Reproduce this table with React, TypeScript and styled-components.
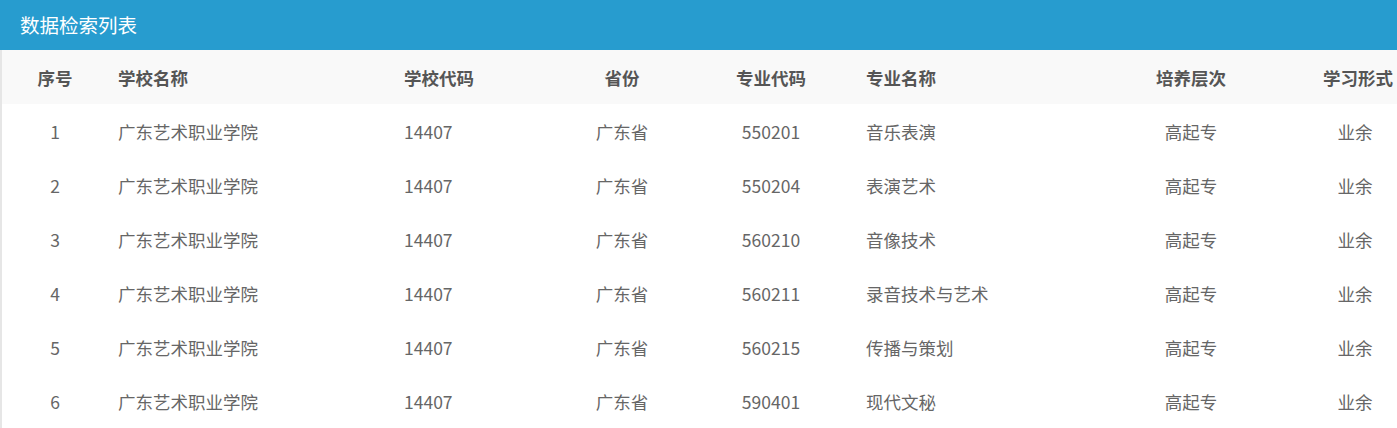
import React from "react";
import styled, { createGlobalStyle } from "styled-components";

const GlobalStyle = createGlobalStyle`
  html, body { margin: 0; padding: 0; background: #fff; }
  body { font-family: "Noto Sans CJK SC", "Noto Sans", sans-serif; }
`;

const Panel = styled.section`
  width: 1397px;
  overflow: hidden;
`;

const TitleBar = styled.div`
  height: 50px;
  background: #279ccf;
  color: #fff;
  font-size: 19.5px;
  line-height: 49px;
  padding-left: 20px;
  box-sizing: border-box;
`;

const TableWrap = styled.div`
  border-left: 2px solid #e6e6e6;
`;

const Table = styled.table`
  border-collapse: collapse;
  table-layout: fixed;
  width: 1395px;
`;

const HeadRow = styled.tr`
  background: #f9f9f9;
  height: 54px;
`;

const BodyRow = styled.tr`
  height: 54px;
  background: #fff;
`;

type Align = "left" | "center";

const Th = styled.th<{ $align: Align }>`
  font-size: 17.5px;
  font-weight: 700;
  color: #555;
  text-align: ${(p) => p.$align};
  padding: 0 10px;
  white-space: nowrap;
`;

const Td = styled.td<{ $align: Align }>`
  font-size: 17.5px;
  color: #666;
  text-align: ${(p) => p.$align};
  padding: 0 10px;
  white-space: nowrap;
`;

const columns: { title: string; width: number; align: Align }[] = [
  { title: "序号", width: 106, align: "center" },
  { title: "学校名称", width: 286, align: "left" },
  { title: "学校代码", width: 164, align: "left" },
  { title: "省份", width: 128, align: "center" },
  { title: "专业代码", width: 170, align: "center" },
  { title: "专业名称", width: 213, align: "left" },
  { title: "培养层次", width: 244, align: "center" },
  { title: "学习形式", width: 84, align: "center" },
];

const rows = [
  ["1", "广东艺术职业学院", "14407", "广东省", "550201", "音乐表演", "高起专", "业余"],
  ["2", "广东艺术职业学院", "14407", "广东省", "550204", "表演艺术", "高起专", "业余"],
  ["3", "广东艺术职业学院", "14407", "广东省", "560210", "音像技术", "高起专", "业余"],
  ["4", "广东艺术职业学院", "14407", "广东省", "560211", "录音技术与艺术", "高起专", "业余"],
  ["5", "广东艺术职业学院", "14407", "广东省", "560215", "传播与策划", "高起专", "业余"],
  ["6", "广东艺术职业学院", "14407", "广东省", "590401", "现代文秘", "高起专", "业余"],
];

export default function App() {
  return (
    <>
      <GlobalStyle />
      <Panel>
        <TitleBar>数据检索列表</TitleBar>
        <TableWrap>
          <Table>
            <colgroup>
              {columns.map((c) => (
                <col key={c.title} style={{ width: c.width }} />
              ))}
            </colgroup>
            <thead>
              <HeadRow>
                {columns.map((c) => (
                  <Th key={c.title} $align={c.align}>
                    {c.title}
                  </Th>
                ))}
              </HeadRow>
            </thead>
            <tbody>
              {rows.map((r) => (
                <BodyRow key={r[0]}>
                  {r.map((v, i) => (
                    <Td key={i} $align={columns[i].align}>
                      {v}
                    </Td>
                  ))}
                </BodyRow>
              ))}
            </tbody>
          </Table>
        </TableWrap>
      </Panel>
    </>
  );
}
